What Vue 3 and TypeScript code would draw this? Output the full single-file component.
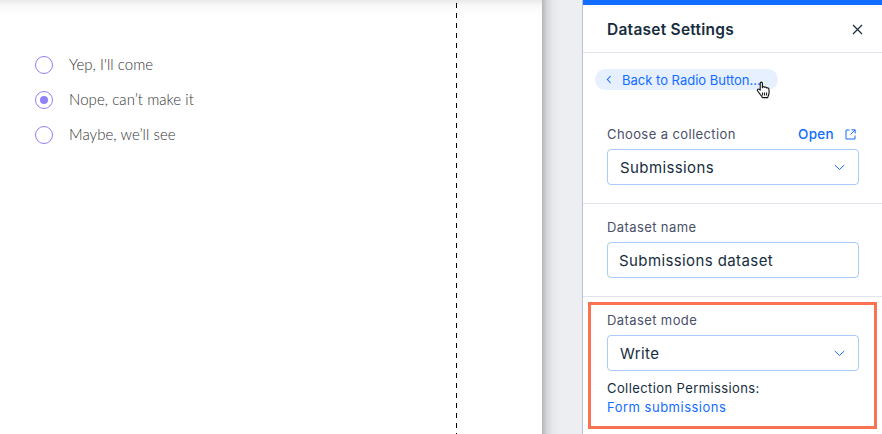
<script setup lang="ts">
const options = [
  { label: "Yep, I'll come", checked: false },
  { label: "Nope, can\u2019t make it", checked: true },
  { label: "Maybe, we\u2019ll see", checked: false },
];
</script>

<template>
  <div class="page">
    <main class="canvas">
      <div class="stage">
        <ul class="radios">
          <li v-for="o in options" :key="o.label" class="radio-row">
            <span class="radio" :class="{ on: o.checked }"></span>
            <span class="radio-label">{{ o.label }}</span>
          </li>
        </ul>
      </div>
      <div class="dash"></div>
    </main>
    <div class="gutter"></div>
    <aside class="panel">
      <div class="topbar"></div>
      <header class="head">
        <h1>Dataset Settings</h1>
        <svg class="close" width="11" height="11" viewBox="0 0 11 11">
          <path d="M1 1 10 10M10 1 1 10" stroke="#162d3d" stroke-width="1.2" fill="none" />
        </svg>
      </header>
      <div class="back-wrap">
        <div class="back">
          <svg width="6" height="9" viewBox="0 0 6 9">
            <path d="M4.6 1 1.4 4.5 4.6 8" stroke="#116dff" stroke-width="1.1" fill="none" />
          </svg>
          <span>Back to Radio Button...</span>
          <svg class="hand" width="16" height="20" viewBox="0 0 16 20">
            <path d="M4.2 2.2c0-1.5 2.2-1.5 2.2 0v4.6l.4-.9c.8-.6 1.8-.2 2 .5.8-.6 1.8-.2 2 .6.9-.4 1.9 0 2.1 1 .3 2 .3 4.2-.3 6-.3 1-.7 1.6-.9 2.6H6.4c-.4-1.2-1.1-2-2-3L1.6 10c-.8-1.2.6-2.6 1.8-1.6l.8.8z" fill="#fff" stroke="#111" stroke-width="1.1" stroke-linejoin="round" />
            <path d="M6.6 11.5v3M8.6 11.5v3M10.6 11.5v3" stroke="#111" stroke-width="1" fill="none" />
          </svg>
        </div>
      </div>
      <section class="sec collection">
        <div class="label-row">
          <label>Choose a collection</label>
          <span class="open">Open
            <svg width="11" height="11" viewBox="0 0 11 11">
              <path d="M4.5 1H1v9h9V6.5M6.5 .8h3.7v3.7M10 1 5.5 5.5" stroke="#116dff" stroke-width="1" fill="none" />
            </svg>
          </span>
        </div>
        <div class="field">
          <span>Submissions</span>
          <svg width="11" height="7" viewBox="0 0 11 7"><path d="M.8 1 5.5 5.5 10.2 1" stroke="#116dff" stroke-width="1" fill="none" /></svg>
        </div>
      </section>
      <section class="sec name">
        <label>Dataset name</label>
        <div class="field input"><span>Submissions dataset</span></div>
      </section>
      <section class="mode">
        <label>Dataset mode</label>
        <div class="field">
          <span>Write</span>
          <svg width="11" height="7" viewBox="0 0 11 7"><path d="M.8 1 5.5 5.5 10.2 1" stroke="#116dff" stroke-width="1" fill="none" /></svg>
        </div>
        <p class="perm">Collection Permissions:</p>
        <a class="link">Form submissions</a>
      </section>
    </aside>
  </div>
</template>

<style>
html, body { margin: 0; background: #fff; }
</style>

<style scoped>
.page {
  display: flex;
  width: 882px;
  height: 434px;
  overflow: hidden;
  font-family: Inter, "Liberation Sans", sans-serif;
  color: #162d3d;
}
.canvas {
  flex: 0 0 542px;
  display: flex;
  background: linear-gradient(#e9e9e9 0, #f8f8f8 5px, #fdfdfd 12px, #fff 20px);
}
.stage { flex: 0 0 456px; padding-top: 55px; box-sizing: border-box; }
.dash {
  flex: 0 0 1px;
  background: repeating-linear-gradient(#000 0 5px, transparent 5px 10px);
  margin-top: 3px;
}
.radios { list-style: none; margin: 0; padding: 0 0 0 35px; display: flex; flex-direction: column; gap: 15px; }
.radio-row { display: flex; align-items: center; height: 20px; gap: 16px; }
.radio {
  box-sizing: border-box;
  width: 18px;
  height: 18px;
  border: 1px solid #8f83f5;
  border-radius: 50%;
  display: flex;
  align-items: center;
  justify-content: center;
}
.radio.on::after { content: ""; width: 8px; height: 8px; border-radius: 50%; background: #8f83f5; }
.radio-label { font-family: Lato, sans-serif; font-weight: 300; font-size: 15px; color: #333; letter-spacing: .05px; padding-bottom: 2px; }
.gutter {
  flex: 0 0 40px;
  background: linear-gradient(90deg, #b4b5b7 0, #d6d7da 5px, #e8e9ec 11px, #eceef2 18px);
  border-right: 1px solid #b9c3d6;
}
.panel { flex: 1; min-width: 0; background: #fff; display: flex; flex-direction: column; }
.topbar { height: 5px; background: #116dff; }
.head {
  height: 48px;
  box-sizing: border-box;
  padding: 1px 19px 0 24px;
  display: flex;
  align-items: center;
  justify-content: space-between;
  border-bottom: 1px solid #dfe5eb;
}
h1 { margin: 0; font-size: 15.5px; font-weight: 600; color: #162d3d; letter-spacing: .25px; }
.back-wrap { padding: 16px 0 0 12px; }
.back {
  position: relative;
  width: 183px;
  height: 21px;
  box-sizing: border-box;
  padding-left: 11px;
  border-radius: 11px;
  background: #e7f0ff;
  color: #116dff;
  font-size: 13px;
  display: flex;
  align-items: center;
  gap: 10px;
}
.hand { position: absolute; left: 161px; top: 12px; }
.sec { padding: 0 23px 0 24px; border-bottom: 1px solid #dfe5eb; }
.collection { margin-top: 35px; padding-bottom: 18px; }
.name { padding-top: 14px; padding-bottom: 18px; }
label { display: block; font-size: 13px; color: #4a5068; line-height: 18px; letter-spacing: .4px; }
.label-row { display: flex; justify-content: space-between; align-items: center; height: 18px; padding-right: 3px; }
.open { color: #116dff; font-size: 13.5px; font-weight: 500; letter-spacing: .3px; display: flex; align-items: center; gap: 11px; }
.field {
  box-sizing: border-box;
  height: 36px;
  margin-top: 6px;
  padding: 0 13px 0 12px;
  border: 1px solid #a8caff;
  border-radius: 4px;
  display: flex;
  align-items: center;
  justify-content: space-between;
  font-size: 15px;
  color: #162d3d;
  letter-spacing: .4px;
}
.input { padding: 0 11px; }
.mode {
  margin: 5px 5px 0;
  height: 127px;
  box-sizing: border-box;
  padding: 6px 15px 0 16px;
  border: 3px solid #fb7252;
}
.perm { margin: 8px 0 0; font-size: 13px; line-height: 18px; color: #162d3d; letter-spacing: .4px; }
.link { display: block; margin-top: 1px; font-size: 13px; line-height: 18px; color: #116dff; letter-spacing: .5px; }
</style>
